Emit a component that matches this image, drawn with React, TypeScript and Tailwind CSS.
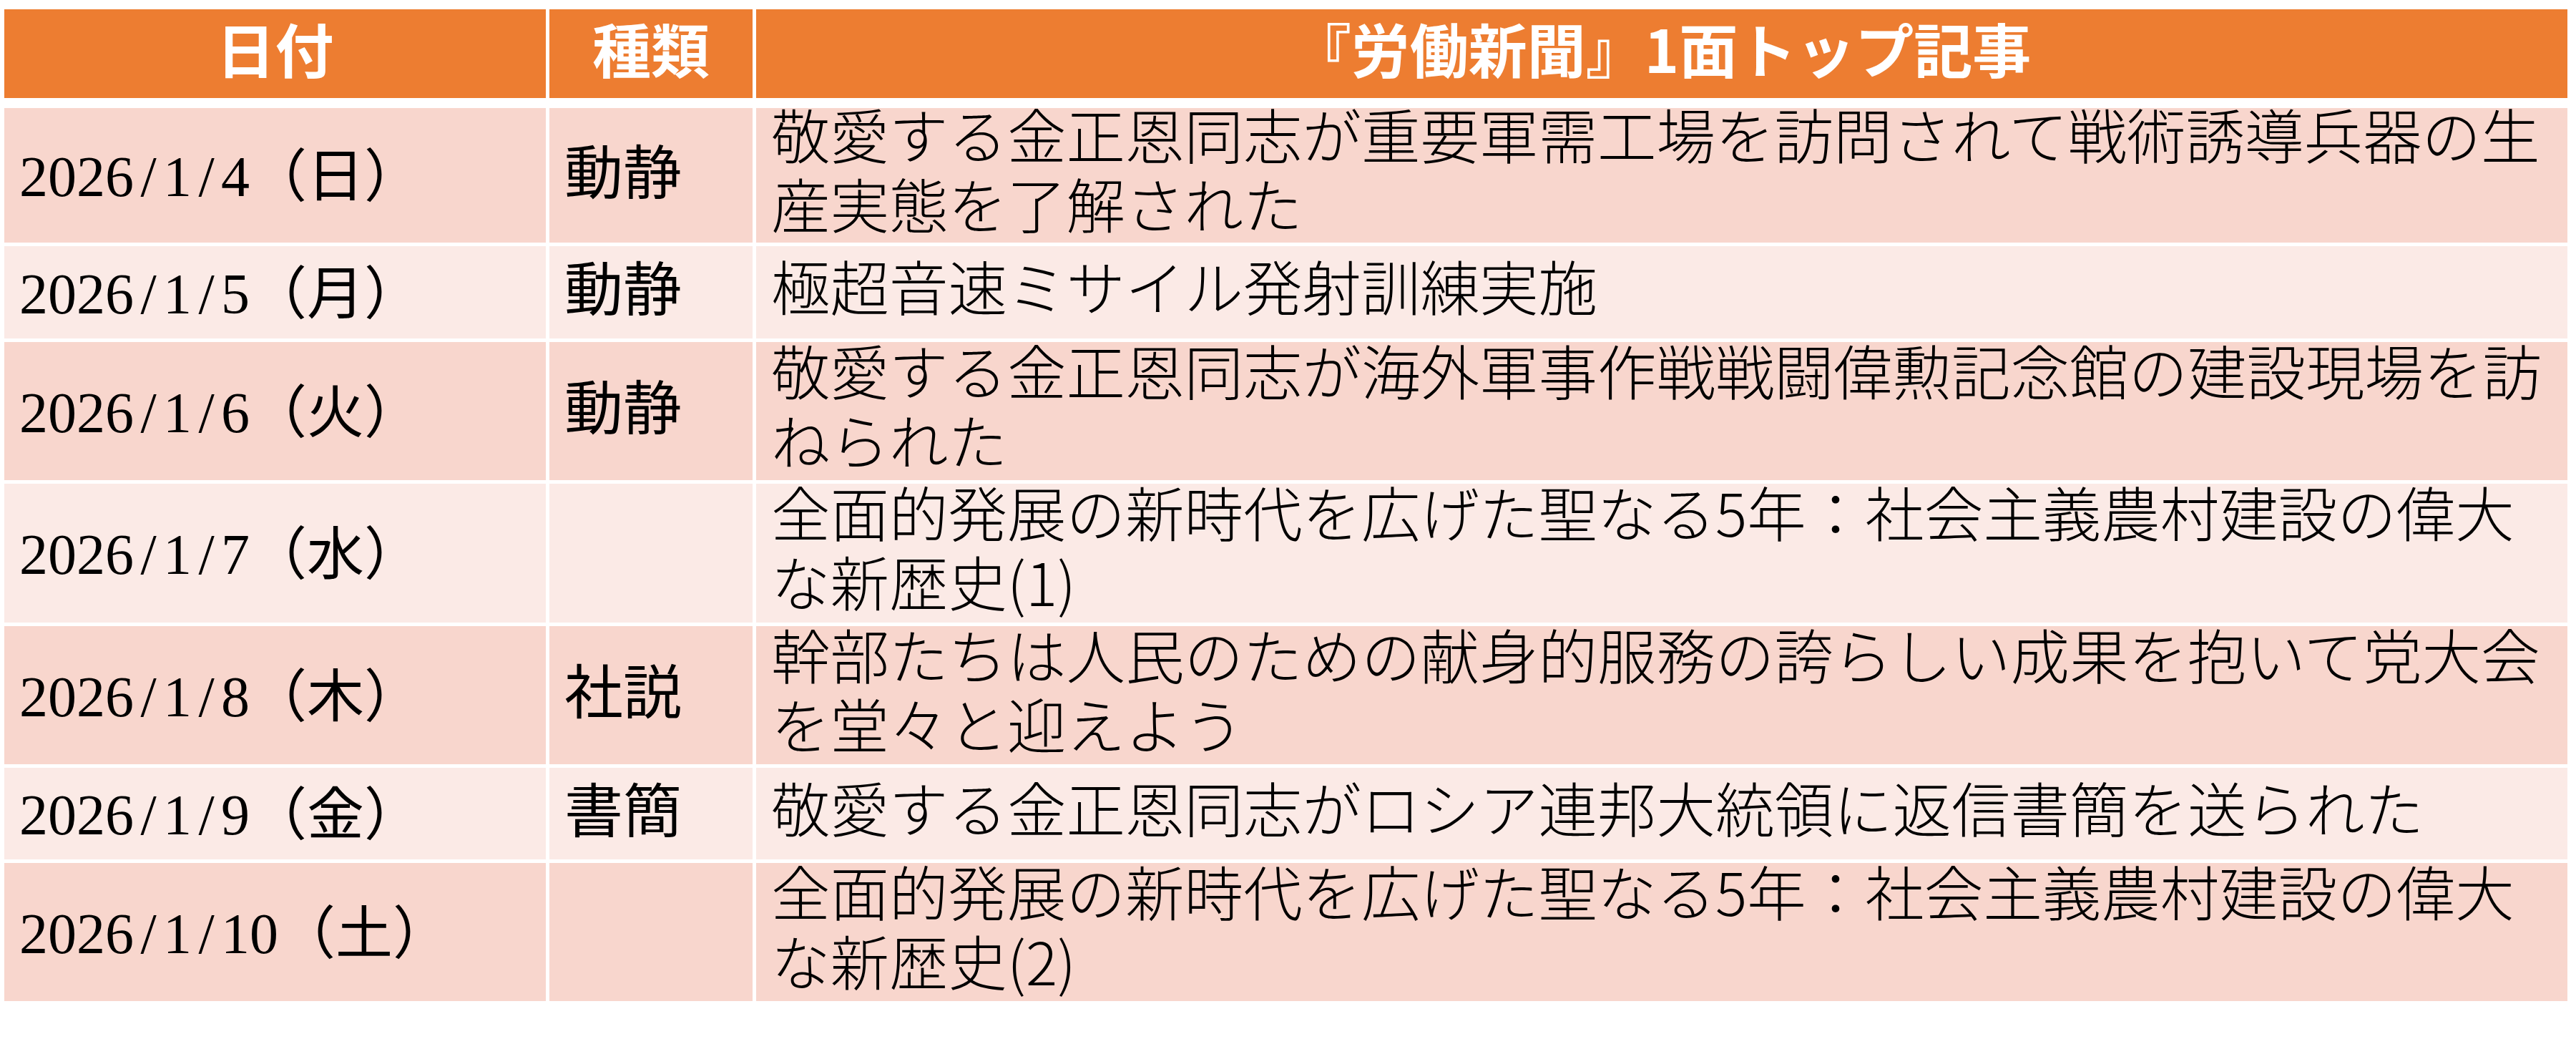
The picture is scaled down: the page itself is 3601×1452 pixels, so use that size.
import React from 'react';

type Row = {
  date: string;
  dow: string;
  kind: string;
  title: string;
  h: string;
  tone: 'dark' | 'light';
};

const rows: Row[] = [
  { date: '2026/1/4', dow: '日', kind: '動静', title: '敬愛する金正恩同志が重要軍需工場を訪問されて戦術誘導兵器の生産実態を了解された', h: 'h-[188px]', tone: 'dark' },
  { date: '2026/1/5', dow: '月', kind: '動静', title: '極超音速ミサイル発射訓練実施', h: 'h-[129px]', tone: 'light' },
  { date: '2026/1/6', dow: '火', kind: '動静', title: '敬愛する金正恩同志が海外軍事作戦戦闘偉勲記念館の建設現場を訪ねられた', h: 'h-[193px]', tone: 'dark' },
  { date: '2026/1/7', dow: '水', kind: '', title: '全面的発展の新時代を広げた聖なる5年：社会主義農村建設の偉大な新歴史(1)', h: 'h-[194px]', tone: 'light' },
  { date: '2026/1/8', dow: '木', kind: '社説', title: '幹部たちは人民のための献身的服務の誇らしい成果を抱いて党大会を堂々と迎えよう', h: 'h-[193px]', tone: 'dark' },
  { date: '2026/1/9', dow: '金', kind: '書簡', title: '敬愛する金正恩同志がロシア連邦大統領に返信書簡を送られた', h: 'h-[128px]', tone: 'light' },
  { date: '2026/1/10', dow: '土', kind: '', title: '全面的発展の新時代を広げた聖なる5年：社会主義農村建設の偉大な新歴史(2)', h: 'h-[193px]', tone: 'dark' },
];

const cols = 'grid grid-cols-[757px_284px_2532px] grid-rows-[minmax(0,1fr)] gap-x-[5px]';
const serif = "font-['Liberation_Serif','Noto_Sans_CJK_JP',serif]";
const gothic = "font-['Noto_Sans_CJK_JP','Noto_Sans',sans-serif]";

// mincho-style dates: half-width slashes are as wide as digits
const DateText: React.FC<{ date: string; dow: string }> = ({ date, dow }) => {
  const parts = date.split('/');
  return (
    <span className="whitespace-nowrap">
      {parts.map((p, i) => (
        <React.Fragment key={i}>
          {i > 0 && <span className="inline-block w-[41px] text-center">/</span>}
          {p}
        </React.Fragment>
      ))}
      <span className={gothic}>（{dow}）</span>
    </span>
  );
};

export default function App() {
  return (
    <div className="w-[3601px] h-[1452px] bg-white pt-[13px] pl-[6px] text-black">
      {/* header */}
      <div className={`${cols} h-[124px] text-white font-bold text-[82px] ${gothic}`}>
        <div className="bg-[#ED7D31] flex items-center justify-center pb-[17px] leading-[97px]">日付</div>
        <div className="bg-[#ED7D31] flex items-center justify-center pb-[17px] leading-[97px]">種類</div>
        <div className="bg-[#ED7D31] flex items-center justify-center pb-[17px] leading-[97px]">『労働新聞』1面トップ記事</div>
      </div>

      <div className="mt-[14px] flex flex-col gap-y-[5px]">
        {rows.map((r) => {
          const bg = r.tone === 'dark' ? 'bg-[#F8D6CD]' : 'bg-[#FBEAE6]';
          return (
            <div key={r.date} className={`${cols} ${r.h}`}>
              <div className={`${bg} flex items-center pl-[21px] pb-[3px] text-[80px] leading-[97px] ${serif}`}>
                <DateText date={r.date} dow={r.dow} />
              </div>
              <div className={`${bg} flex items-center pl-[21px] pb-[20px] text-[82px] leading-[97px] ${gothic}`}>
                {r.kind}
              </div>
              <div className={`${bg} flex items-center pl-[21px] pr-[16px] pb-[20px] text-[82.5px] leading-[97px] font-light ${gothic}`}>
                <p>{r.title}</p>
              </div>
            </div>
          );
        })}
      </div>
    </div>
  );
}
